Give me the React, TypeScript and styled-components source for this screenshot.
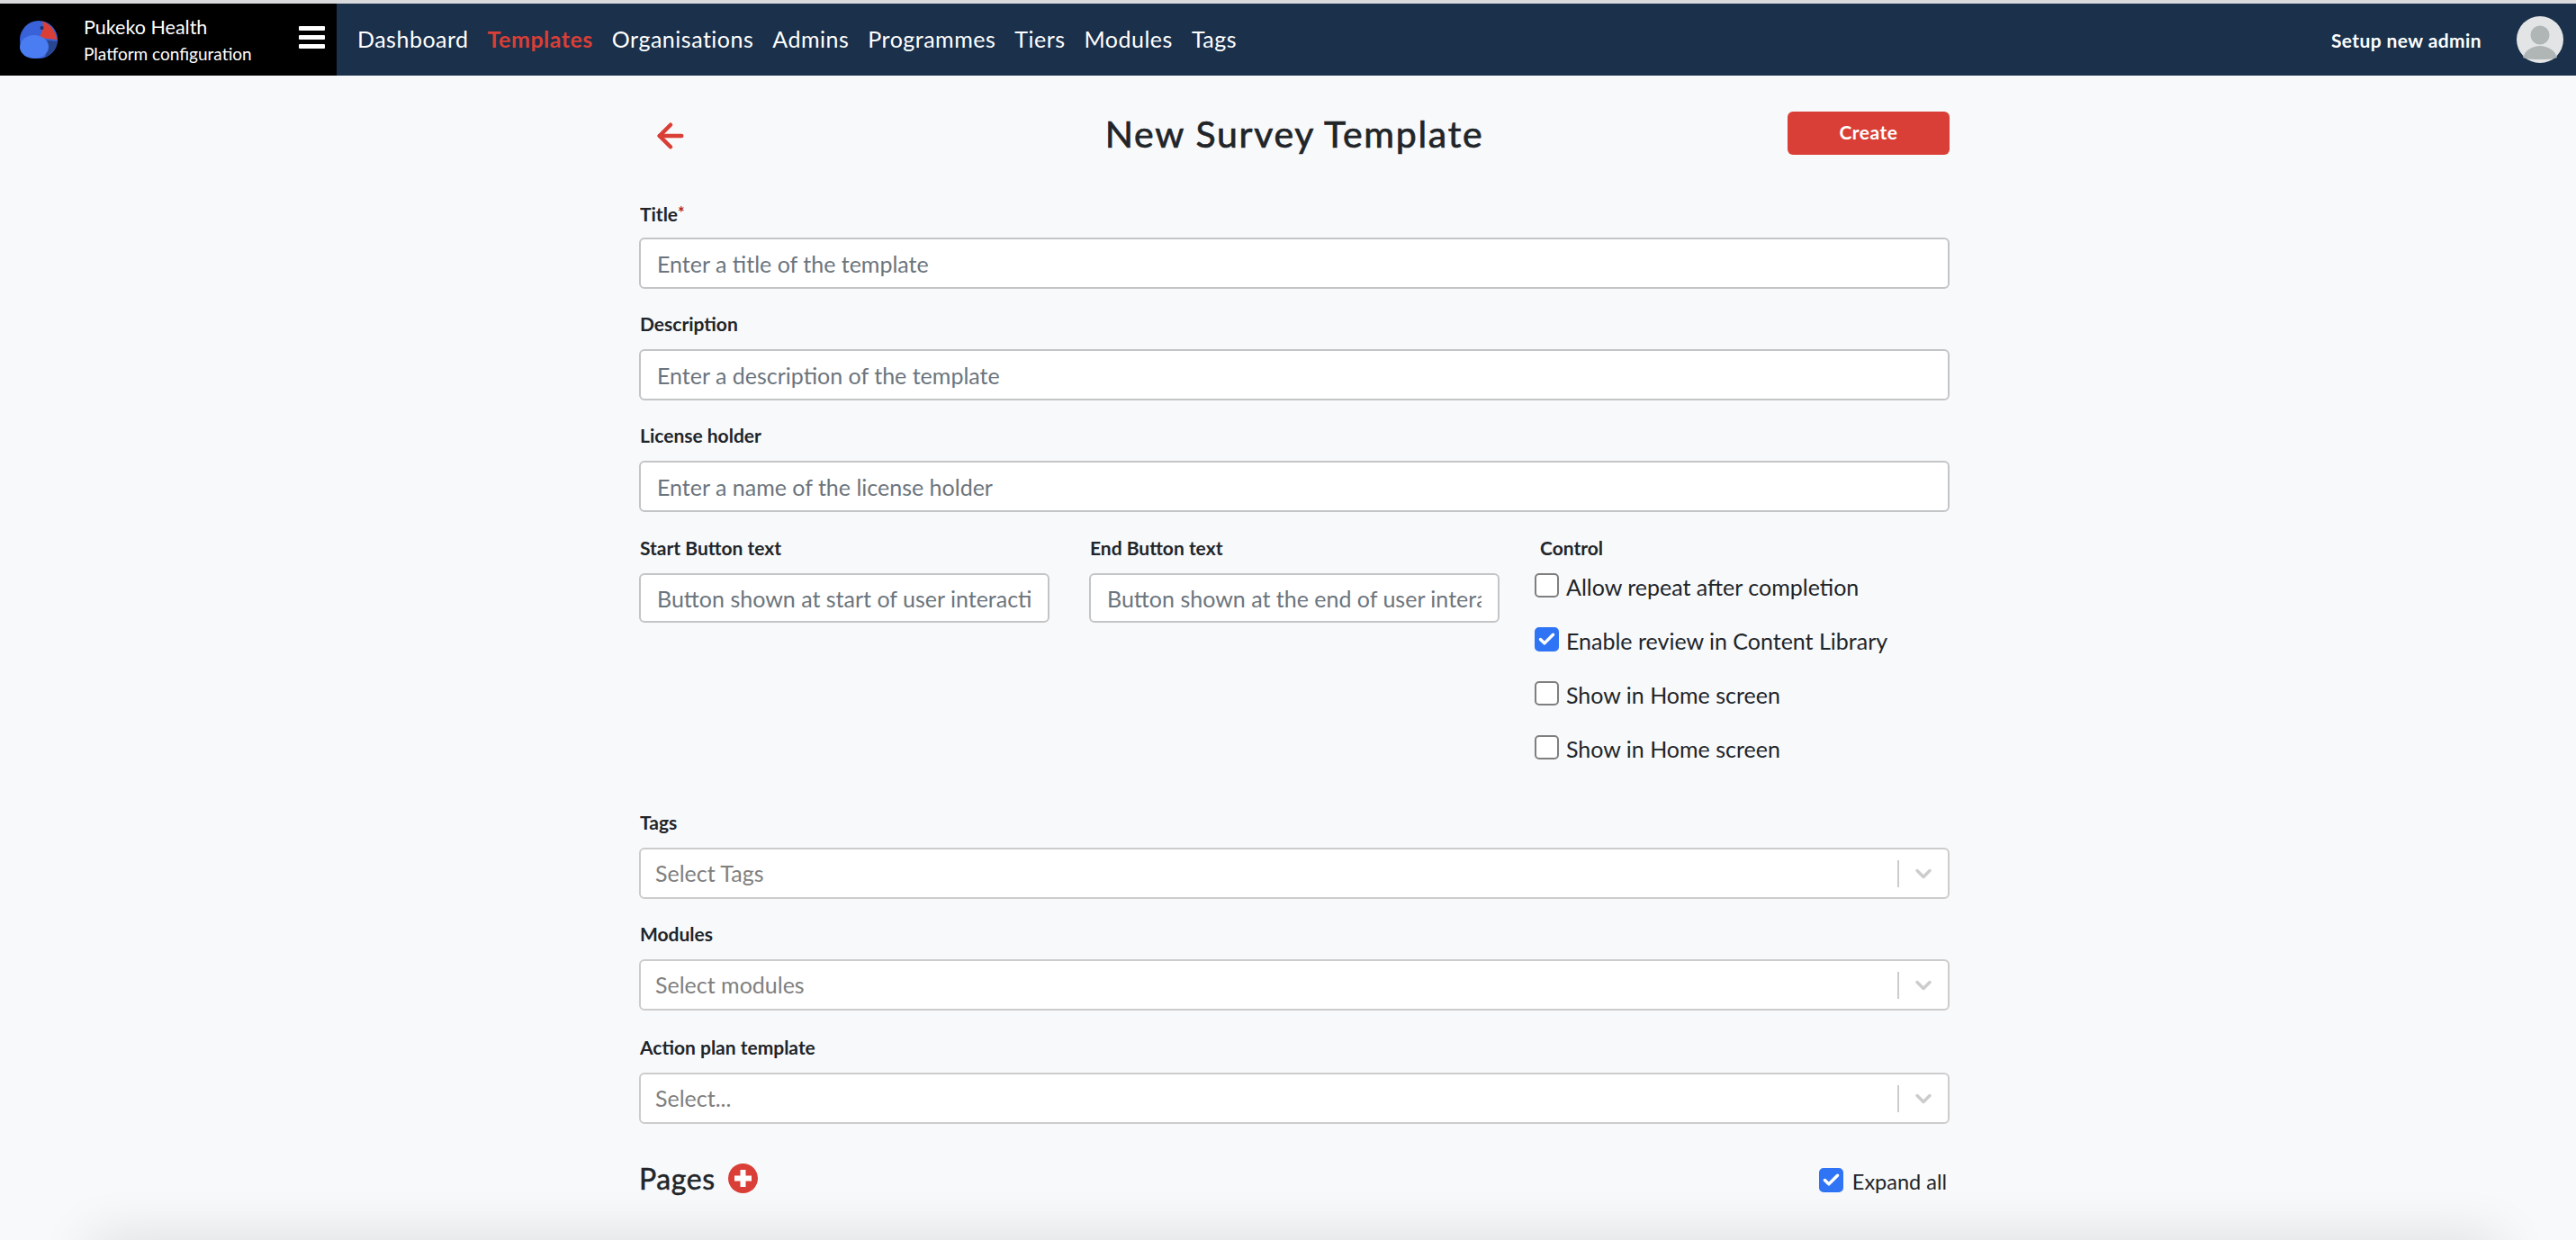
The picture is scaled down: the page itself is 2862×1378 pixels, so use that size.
import styled, { createGlobalStyle } from "styled-components";
import { ArrowLeft, Check, ChevronDown } from "lucide-react";

const GlobalStyle = createGlobalStyle`
  html, body {
    margin: 0;
    padding: 0;
    background: #f8f9fb;
    font-family: "Lato", "Open Sans", sans-serif;
    color: #212529;
  }
  * { box-sizing: border-box; }
`;

const Page = styled.div`
  height: 100vh;
  overflow: hidden;
  display: flex;
  flex-direction: column;
  border-top: 4px solid #d9dadc;
`;

const TopBar = styled.header`
  flex: 0 0 80px;
  display: flex;
  align-items: center;
  background: #1a304b;
  color: #fff;
`;

const Brand = styled.div`
  flex: 0 0 374px;
  height: 100%;
  background: #000;
  display: flex;
  align-items: center;
  padding: 0 13px 0 22px;
`;

const BrandText = styled.div`
  margin-left: 29px;
  flex: 1;
  display: flex;
  flex-direction: column;
  gap: 7px;
`;

const BrandName = styled.span`
  font-size: 21.5px;
  line-height: 24px;
`;

const BrandSub = styled.span`
  font-size: 19px;
  line-height: 22px;
`;

const Burger = styled.div`
  width: 29px;
  margin-bottom: 5px;
  display: flex;
  flex-direction: column;
  gap: 5px;
  span {
    height: 5px;
    border-radius: 1px;
    background: #fff;
  }
`;

const Nav = styled.nav`
  display: flex;
  gap: 21px;
  margin-left: 23px;
  padding-bottom: 2px;
  flex: 1;
`;

const NavItem = styled.a<{ $active?: boolean }>`
  font-size: 25px;
  letter-spacing: 0.5px;
  color: ${(p) => (p.$active ? "#d93f36" : "#fff")};
  font-weight: ${(p) => (p.$active ? 700 : 400)};
`;

const SetupLink = styled.a`
  font-size: 21px;
  letter-spacing: 0.4px;
  font-weight: 700;
  color: #fff;
  margin-right: 39px;
`;

const Avatar = styled.svg`
  width: 52px;
  height: 52px;
  margin-right: 14px;
`;

const Main = styled.main`
  flex: 1 0 1294px;
  width: 1456px;
  margin-left: 710px;
`;

const TitleRow = styled.div`
  display: flex;
  align-items: center;
  justify-content: space-between;
  height: 48px;
  margin-top: 40px;
  position: relative;
`;

const BackButton = styled.a`
  display: flex;
  margin: 6px 0 0 14px;
  color: #d93f36;
`;

const Heading = styled.h1`
  margin: 0;
  font-size: 41px;
  letter-spacing: 1.7px;
  font-weight: 400;
  -webkit-text-stroke: 0.7px #212529;
  position: absolute;
  left: 0;
  right: 0;
  top: 0;
  text-align: center;
`;

const CreateButton = styled.button`
  width: 180px;
  height: 48px;
  border: 0;
  border-radius: 6px;
  padding: 0 0 3px;
  background: #d93f36;
  color: #fff;
  font: 700 21px "Lato", sans-serif;
  letter-spacing: 0.5px;
  position: relative;
`;

const Field = styled.div<{ $top: number }>`
  margin-top: ${(p) => p.$top}px;
`;

const Label = styled.label`
  display: block;
  height: 24px;
  line-height: 24px;
  margin-bottom: 16px;
  padding-left: 1px;
  font-size: 21px;
  font-weight: 700;
`;

const Required = styled.span`
  color: #b3261e;
  font-size: 18px;
  vertical-align: 3px;
`;

const TextInput = styled.input<{ $height?: number }>`
  display: block;
  width: 100%;
  height: ${(p) => p.$height ?? 57}px;
  border: 2px solid #c4c5c7;
  border-radius: 6px;
  background: #fff;
  padding: 0 18px;
  font: 400 25px "Lato", sans-serif;
  &::placeholder {
    color: #6c757d;
    opacity: 1;
  }
`;

const Columns = styled.div`
  margin-top: 28px;
  display: grid;
  grid-template-columns: 456px 456px 1fr;
  column-gap: 44px;
  height: 305px;
`;

const ControlList = styled.div`
  margin-left: -5px;
  display: flex;
  flex-direction: column;
  gap: 33px;
`;

const CheckRow = styled.label`
  display: flex;
  align-items: center;
  gap: 8px;
  height: 27px;
  font-size: 25px;
`;

const CheckText = styled.span`
  padding-top: 3px;
`;

const CheckBox = styled.span<{ $checked?: boolean }>`
  flex: 0 0 27px;
  height: 27px;
  border-radius: 5px;
  display: flex;
  align-items: center;
  justify-content: center;
  color: #fff;
  background: ${(p) => (p.$checked ? "#2f74f5" : "#fff")};
  border: 2px solid ${(p) => (p.$checked ? "#2f74f5" : "#7f7f7f")};
`;

const SelectBox = styled.div`
  height: 57px;
  border: 2px solid #cccccc;
  border-radius: 6px;
  background: #fff;
  display: flex;
  align-items: center;
  padding-left: 16px;
  font-size: 25px;
  color: #808080;
`;

const SelectText = styled.span`
  flex: 1;
  padding-bottom: 2px;
`;

const SelectDivider = styled.span`
  width: 2px;
  height: 30px;
  background: #cccccc;
`;

const SelectArrow = styled.span`
  display: flex;
  width: 54px;
  justify-content: center;
  color: #cccccc;
`;

const PagesRow = styled.div`
  margin-top: 46px;
  height: 32px;
  display: flex;
  align-items: center;
  justify-content: space-between;
`;

const PagesTitle = styled.div`
  display: flex;
  align-items: center;
  gap: 14px;
  margin-bottom: 3px;
  font-size: 32px;
  letter-spacing: 0.6px;
  -webkit-text-stroke: 0.5px #212529;
`;

const AddIcon = styled.svg`
  width: 33px;
  height: 33px;
`;

const ExpandRow = styled(CheckRow)`
  margin-right: 3px;
  gap: 10px;
  font-size: 23.5px;
`;

const NextCard = styled.div`
  flex: 0 0 40px;
  margin: 0 85px 0 100px;
  background: #fff;
  box-shadow: 0 0 60px rgba(0, 0, 0, 0.14);
`;

const navItems = ["Dashboard", "Templates", "Organisations", "Admins", "Programmes", "Tiers", "Modules", "Tags"];
const controls = [
  { text: "Allow repeat after completion", checked: false },
  { text: "Enable review in Content Library", checked: true },
  { text: "Show in Home screen", checked: false },
  { text: "Show in Home screen", checked: false },
];

function Select({ placeholder }: { placeholder: string }) {
  return (
    <SelectBox>
      <SelectText>{placeholder}</SelectText>
      <SelectDivider />
      <SelectArrow>
        <ChevronDown size={28} strokeWidth={3} />
      </SelectArrow>
    </SelectBox>
  );
}

function Logo() {
  return (
    <svg width="42" height="42" viewBox="0 0 42 42">
      <circle cx="21" cy="21" r="21" fill="#3a62d8" />
      <path d="M25 0.5 C33 3 39 10 41.5 21 L21 19 C25 14 27 7 25 0.5Z" fill="#d93f36" />
      <path d="M23 21 L41.5 23 C41 31 35 38 28 40.5 C31 33 29 26 23 21Z" fill="#27468f" />
      <ellipse cx="16" cy="29" rx="16" ry="13" fill="#4a7cf2" />
      <circle cx="24.5" cy="8" r="2" fill="#1b2f6b" />
    </svg>
  );
}

export default function App() {
  return (
    <>
      <GlobalStyle />
      <Page>
        <TopBar>
          <Brand>
            <Logo />
            <BrandText>
              <BrandName>Pukeko Health</BrandName>
              <BrandSub>Platform configuration</BrandSub>
            </BrandText>
            <Burger>
              <span />
              <span />
              <span />
            </Burger>
          </Brand>
          <Nav>
            {navItems.map((item) => (
              <NavItem key={item} $active={item === "Templates"}>
                {item}
              </NavItem>
            ))}
          </Nav>
          <SetupLink>Setup new admin</SetupLink>
          <Avatar viewBox="0 0 52 52">
            <circle cx="26" cy="26" r="26" fill="#e3e4e5" />
            <g fill="#b0b5b6">
              <circle cx="26" cy="21" r="10.5" />
              <path d="M7 46 C9 38 18 33 26 33 C34 33 43 38 45 46 C40 48 33 48 26 48 C19 48 12 48 7 46Z" />
            </g>
          </Avatar>
        </TopBar>
        <Main>
          <TitleRow>
            <BackButton>
              <ArrowLeft size={42} strokeWidth={2.6} />
            </BackButton>
            <Heading>New Survey Template</Heading>
            <CreateButton>Create</CreateButton>
          </TitleRow>
          <Field $top={52}>
            <Label>
              Title<Required>*</Required>
            </Label>
            <TextInput placeholder="Enter a title of the template" />
          </Field>
          <Field $top={27}>
            <Label>Description</Label>
            <TextInput placeholder="Enter a description of the template" />
          </Field>
          <Field $top={27}>
            <Label>License holder</Label>
            <TextInput placeholder="Enter a name of the license holder" />
          </Field>
          <Columns>
            <div>
              <Label>Start Button text</Label>
              <TextInput $height={55} placeholder="Button shown at start of user interaction" />
            </div>
            <div>
              <Label>End Button text</Label>
              <TextInput $height={55} placeholder="Button shown at the end of user interaction" />
            </div>
            <div>
              <Label>Control</Label>
              <ControlList>
                {controls.map((c, i) => (
                  <CheckRow key={i}>
                    <CheckBox $checked={c.checked}>{c.checked && <Check size={21} strokeWidth={4} />}</CheckBox>
                    <CheckText>{c.text}</CheckText>
                  </CheckRow>
                ))}
              </ControlList>
            </div>
          </Columns>
          <Field $top={0}>
            <Label>Tags</Label>
            <Select placeholder="Select Tags" />
          </Field>
          <Field $top={27}>
            <Label>Modules</Label>
            <Select placeholder="Select modules" />
          </Field>
          <Field $top={29}>
            <Label>Action plan template</Label>
            <Select placeholder="Select..." />
          </Field>
          <PagesRow>
            <PagesTitle>
              Pages
              <AddIcon viewBox="0 0 33 33">
                <circle cx="16.5" cy="16.5" r="16.5" fill="#d93f36" />
                <path d="M16.5 7v19M7 16.5h19" stroke="#fff" strokeWidth="6" />
              </AddIcon>
            </PagesTitle>
            <ExpandRow>
              <CheckBox $checked>
                <Check size={21} strokeWidth={4} />
              </CheckBox>
              <CheckText>Expand all</CheckText>
            </ExpandRow>
          </PagesRow>
        </Main>
        <NextCard />
      </Page>
    </>
  );
}
